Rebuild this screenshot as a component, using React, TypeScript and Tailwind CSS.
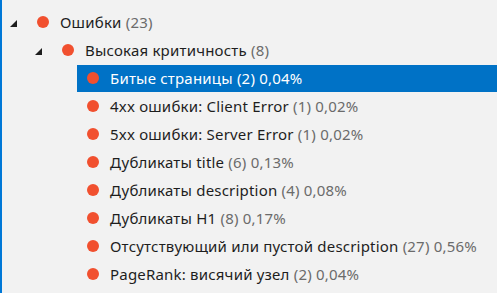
import React from 'react';

type Node = {
  label: string;
  count: number;
  percent?: string;
  level: number;
  expanded?: boolean;
  selected?: boolean;
};

const nodes: Node[] = [
  { label: 'Ошибки', count: 23, level: 0, expanded: true },
  { label: 'Высокая критичность', count: 8, level: 1, expanded: true },
  { label: 'Битые страницы', count: 2, percent: '0,04%', level: 2, selected: true },
  { label: '4xx ошибки: Client Error', count: 1, percent: '0,02%', level: 2 },
  { label: '5xx ошибки: Server Error', count: 1, percent: '0,02%', level: 2 },
  { label: 'Дубликаты title', count: 6, percent: '0,13%', level: 2 },
  { label: 'Дубликаты description', count: 4, percent: '0,08%', level: 2 },
  { label: 'Дубликаты H1', count: 8, percent: '0,17%', level: 2 },
  { label: 'Отсутствующий или пустой description', count: 27, percent: '0,56%', level: 2 },
  { label: 'PageRank: висячий узел', count: 2, percent: '0,04%', level: 2 },
];

const indents = ['pl-[8px]', 'pl-[33px]', 'pl-[58px]'];

function Row({ node }: { node: Node }) {
  const muted = node.selected ? 'text-white' : 'text-[#6b6b6b]';
  return (
    <div className={`flex h-[28px] items-center ${indents[node.level]}`}>
      {/* Expander */}
      <div className="flex w-[17px] shrink-0 items-center">
        {node.expanded && (
          <svg width="7" height="7" viewBox="0 0 7 7" className="mt-[3px]">
            <polygon points="7,0 7,7 0,7" fill="#1e1e1e" />
          </svg>
        )}
      </div>
      <div
        className={`flex h-[27px] flex-1 items-center ${
          node.selected ? 'bg-[#0072c6] text-white' : 'text-[#1e1e1e]'
        }`}
      >
        <span className="ml-[10px] h-[12px] w-[12px] shrink-0 rounded-full bg-[#f1502f]" />
        <span className="ml-[11px] whitespace-nowrap tracking-[0.2px]">
          {node.label} <span className={muted}>({node.count})</span>
          {node.percent && <span className={muted}> {node.percent}</span>}
        </span>
      </div>
    </div>
  );
}

export default function App() {
  return (
    <div className="h-[293px] w-[497px] overflow-hidden border-l-2 border-[#0078d7] bg-[#f2f2f2] pt-[8px] font-['Noto_Sans',sans-serif] text-[15px]">
      {nodes.map((n, i) => (
        <Row key={i} node={n} />
      ))}
    </div>
  );
}
